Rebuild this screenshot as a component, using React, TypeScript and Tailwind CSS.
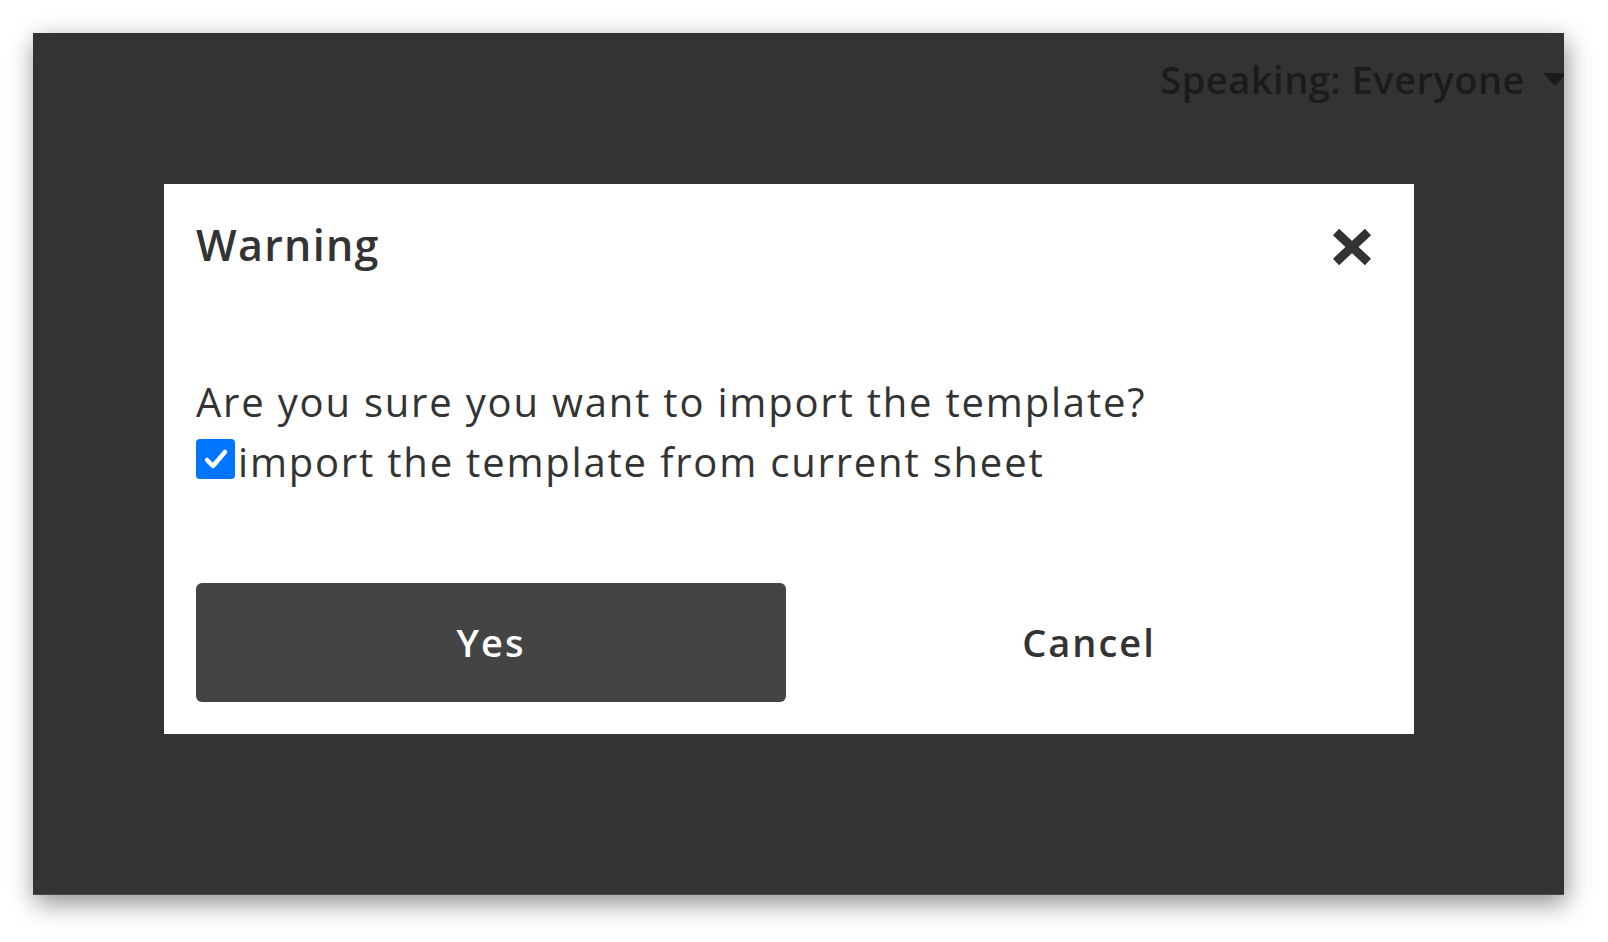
import React, { useState } from "react";

const CloseIcon = () => (
  <svg width="44" height="40" viewBox="0 0 44 40" aria-hidden="true">
    <path
      d="M6 5 L38 35 M38 5 L6 35"
      stroke="#333333"
      strokeWidth="9"
      strokeLinecap="butt"
    />
  </svg>
);

const CaretDown = () => (
  <svg width="21" height="13" viewBox="0 0 21 13" aria-hidden="true" className="shrink-0">
    <path d="M0 0 H24 L12 13 Z" fill="#1b1b1b" />
  </svg>
);

const CheckBox = ({ checked, onToggle }: { checked: boolean; onToggle: () => void }) => (
  <button
    type="button"
    onClick={onToggle}
    className={`mb-[6px] flex h-[40px] w-[39px] shrink-0 items-center justify-center rounded-[4px] ${
      checked ? "bg-[#0075ff]" : "border-2 border-[#767676] bg-white"
    }`}
  >
    {checked && (
      <svg width="30" height="30" viewBox="0 0 30 30" aria-hidden="true">
        <path
          d="M6 16 L12 22 L24 8"
          fill="none"
          stroke="white"
          strokeWidth="4.5"
          strokeLinecap="round"
          strokeLinejoin="round"
        />
      </svg>
    )}
  </button>
);

const App = () => {
  const [fromSheet, setFromSheet] = useState(true);

  return (
    <div className="h-[942px] w-[1608px] overflow-hidden bg-white p-[33px] font-['Open_Sans',sans-serif]">
      <div className="flex h-[862px] w-[1531px] flex-col overflow-hidden border-b border-[#4a4a4a] bg-[#333333] shadow-[2px_8px_24px_rgba(0,0,0,0.45)]">
        <div className="flex justify-end pt-[18px]">
          <div className="flex shrink-0 items-center gap-[18px] text-[38px] font-semibold tracking-[0.5px] text-[#1b1b1b]">
            <span className="whitespace-nowrap">Speaking: Everyone</span>
            <CaretDown />
          </div>
        </div>

        <div className="ml-[131px] mt-[76px] flex h-[550px] w-[1250px] flex-col bg-white px-[32px] pb-[32px] pt-[29px] text-[#333333]">
          <div className="flex items-center justify-between">
            <h2 className="text-[43px] font-semibold tracking-[1.3px]">Warning</h2>
            <button type="button" className="mr-[8px] mt-[4px]">
              <CloseIcon />
            </button>
          </div>

          <div className="mt-[94px] text-[40px] leading-[60px] tracking-[1.8px]">
            <p>Are you sure you want to import the template?</p>
            <label className="flex items-center gap-[3px]">
              <CheckBox checked={fromSheet} onToggle={() => setFromSheet(!fromSheet)} />
              <span>import the template from current sheet</span>
            </label>
          </div>

          <div className="mt-auto flex gap-[10px]">
            <button
              type="button"
              className="h-[119px] w-[590px] rounded-[6px] bg-[#444444] text-[38px] font-semibold tracking-[2px] text-white"
            >
              Yes
            </button>
            <button
              type="button"
              className="h-[119px] flex-1 text-[38px] font-semibold tracking-[2px] text-[#333333]"
            >
              Cancel
            </button>
          </div>
        </div>
      </div>
    </div>
  );
};

export default App;
